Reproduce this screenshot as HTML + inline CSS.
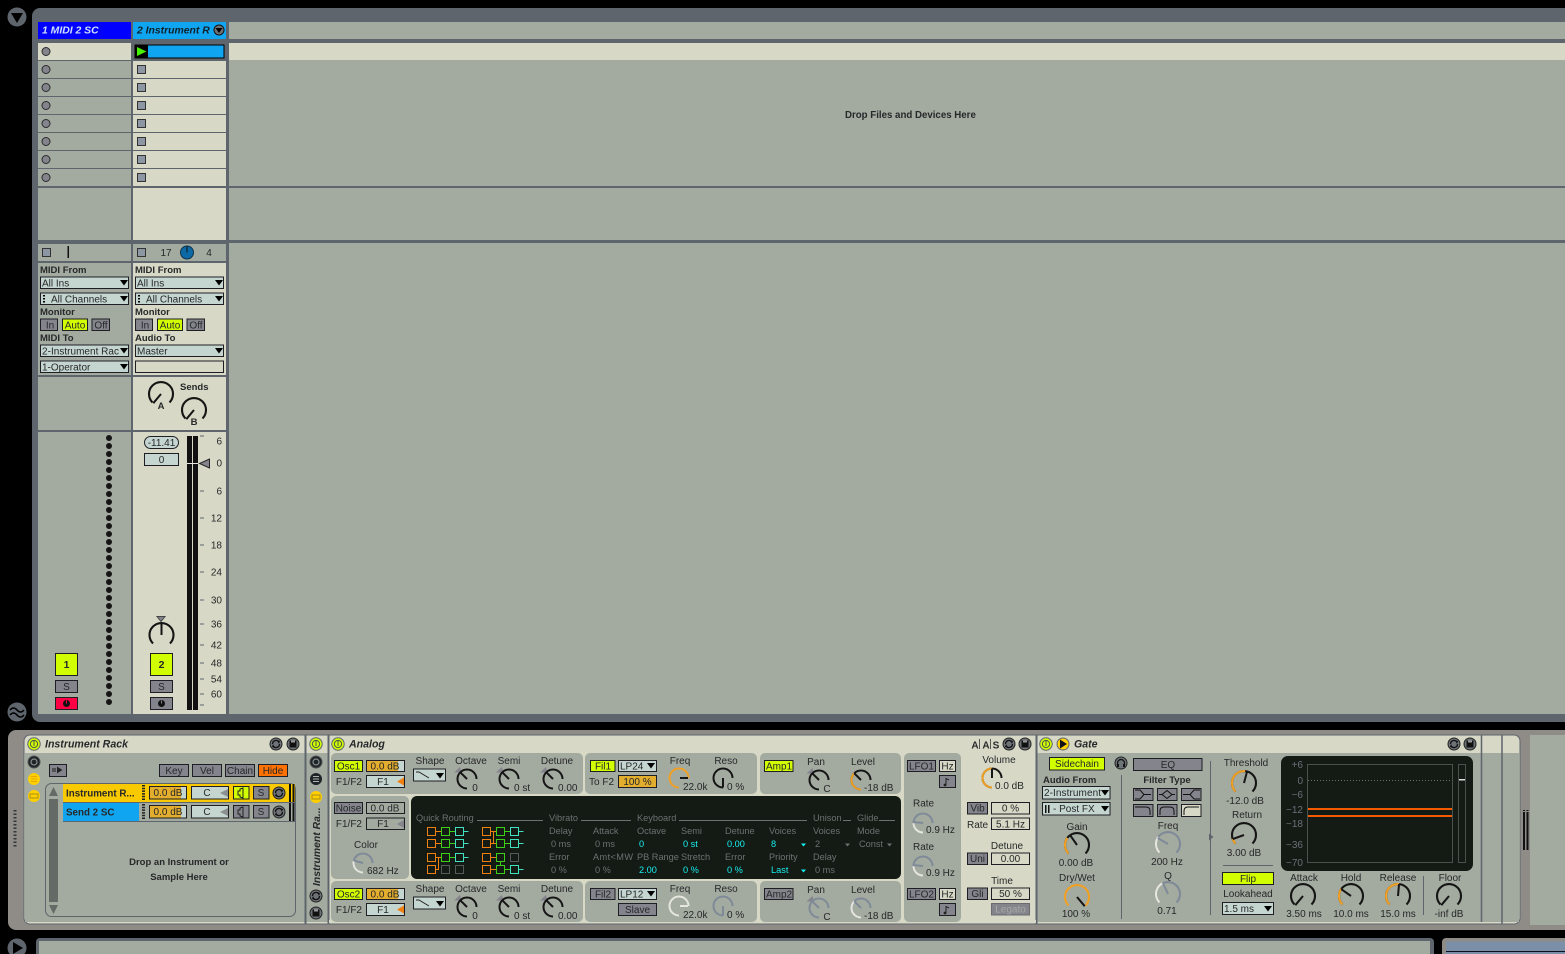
<!DOCTYPE html>
<html><head><meta charset="utf-8"><style>
html,body{margin:0;padding:0;background:#000;width:1565px;height:954px;overflow:hidden}
svg{display:block}
text{font-family:"Liberation Sans",sans-serif;font-size:10px;fill:#26282a}
.m{text-anchor:middle}.r{text-anchor:end}.B{font-weight:bold;font-size:9.5px}.I{font-style:italic;font-weight:bold}
.g{fill:#84848c;stroke:#1e1e24}.y{fill:#d2ff00;stroke:#1e1e24}.d{fill:#c5d5d0;stroke:#1e1e24}.e{fill:none;stroke:#1e1e24}.lt{fill:#d7d9c6;stroke:#1e1e24}
.o{fill:#e3ad2e}.lb{fill:#c5d5d0}
.a0{stroke:#151515}.aD{stroke:#7f8a98}.or{stroke:#f0a024}.wh{stroke:#e6e6e0}
.n{stroke:#151515;stroke-width:2;fill:none}.nD{stroke:#7f8a98;stroke-width:2;fill:none}
.dk{fill:#6c7272;font-size:9.2px}.cy{fill:#16f0f0;font-size:9.2px}
.pl{fill:#6a7078;font-size:10px}
.ro{fill:none;stroke:#f08010;stroke-width:1}.rg{fill:none;stroke:#3cd019;stroke-width:1}.rc{fill:none;stroke:#40e0c0;stroke-width:1}.rx{fill:none;stroke:#555a5a;stroke-width:1}
</style></head><body>
<svg xmlns="http://www.w3.org/2000/svg" width="1565" height="954" viewBox="0 0 1565 954">
<defs>
<path id="K" d="M-8.5,8.5A12,12 0 1 1 8.5,8.5" pathLength="100" fill="none" stroke-width="2.1"/>
<path id="S" d="M0,9.5A9.5,9.5 0 1 1 9.5,0" pathLength="100" fill="none" stroke-width="2"/>
<g id="PW"><circle r="6.2" fill="#d2ff00" stroke="#5f656d"/><circle r="3.6" fill="none" stroke="#4a5050"/><path d="M0-3V2" stroke="#4a5050"/></g>
<g id="HS"><circle r="6" fill="#6e7378" stroke="#222"/><path d="M-3.5,0A3.5,3.5 0 0 1 2.5,-2.5M3.5,0A3.5,3.5 0 0 1 -2.5,2.5" fill="none" stroke="#111" stroke-width="1.3"/><path d="M1-4l3 1-1 3zM-1 4l-3-1 1-3z" fill="#111"/></g>
<g id="SV"><circle r="6" fill="#6e7378" stroke="#222"/><path d="M-3.5-3.5h7v7h-7z" fill="#111"/><path d="M-2-3.5h4v2h-4z" fill="#999"/></g>
<path id="TG" d="M0,0h7.5l-1.5,-5.5z" fill="#84848c"/>
</defs>
<rect width="1565" height="954" fill="#000"/>

<!-- top left icons -->
<circle cx="17" cy="17" r="9.5" fill="#5f656d"/><path d="M11,13h12l-6,10z" fill="#000"/>
<circle cx="17" cy="712" r="9.5" fill="#5f656d"/><path d="M10,710q3.5-4 7 0t7 0M10,715q3.5-4 7 0t7 0" fill="none" stroke="#000" stroke-width="1.6"/>

<!-- session frame -->
<path d="M1565,8H40a8,8 0 0 0-8,8V714a8,8 0 0 0 8,8H1565z" fill="#5f656d"/>
<rect x="38" y="22" width="93" height="17" fill="#0000ff"/>
<rect x="133" y="22" width="93" height="17" fill="#10a5f0"/>
<rect x="229" y="22" width="1336" height="17" fill="#a3aa9f"/>
<text x="42" y="33.5" class="I" style="font-size:10.4px;fill:#cfe0ff">1 MIDI 2 SC</text>
<text x="137" y="33.5" class="I" style="font-size:10.4px;fill:#10202a">2 Instrument R</text>
<circle cx="219" cy="30" r="5" fill="#6e7378" stroke="#111"/><path d="M215.5,28h7l-3.5,5z" fill="#000"/>

<!-- clips -->
<rect x="38" y="43" width="93" height="17" fill="#d7d9c6"/>
<rect x="229" y="43" width="1336" height="17" fill="#d7d9c6"/>
<rect x="135" y="45" width="89" height="13" fill="#10a5f0" stroke="#000" stroke-width="1"/>
<rect x="135" y="45" width="13" height="13" fill="#000"/>
<path d="M137,47l9.5,4.5-9.5,4.5z" fill="#44f000"/>
<g fill="#a3aa9f">
<rect x="38" y="61" width="93" height="17"/><rect x="38" y="79" width="93" height="17"/><rect x="38" y="97" width="93" height="17"/><rect x="38" y="115" width="93" height="17"/><rect x="38" y="133" width="93" height="17"/><rect x="38" y="151" width="93" height="17"/><rect x="38" y="169" width="93" height="17"/>
<rect x="229" y="60" width="1336" height="126"/>
<rect x="38" y="188" width="93" height="52"/><rect x="229" y="188" width="1336" height="52"/>
</g>
<g fill="#d7d9c6">
<rect x="133" y="61" width="93" height="17"/><rect x="133" y="79" width="93" height="17"/><rect x="133" y="97" width="93" height="17"/><rect x="133" y="115" width="93" height="17"/><rect x="133" y="133" width="93" height="17"/><rect x="133" y="151" width="93" height="17"/><rect x="133" y="169" width="93" height="17"/>
<rect x="133" y="188" width="93" height="52"/>
</g>
<g fill="#84848c" stroke="#2a2a2e">
<circle cx="46" cy="51.5" r="4"/><circle cx="46" cy="69.5" r="4"/><circle cx="46" cy="87.5" r="4"/><circle cx="46" cy="105.5" r="4"/><circle cx="46" cy="123.5" r="4"/><circle cx="46" cy="141.5" r="4"/><circle cx="46" cy="159.5" r="4"/><circle cx="46" cy="177.5" r="4"/>
</g>
<g fill="#8d97a4" stroke="#333">
<rect x="137.5" y="65.5" width="8" height="8"/><rect x="137.5" y="83.5" width="8" height="8"/><rect x="137.5" y="101.5" width="8" height="8"/><rect x="137.5" y="119.5" width="8" height="8"/><rect x="137.5" y="137.5" width="8" height="8"/><rect x="137.5" y="155.5" width="8" height="8"/><rect x="137.5" y="173.5" width="8" height="8"/>
</g>
<text x="845" y="118" class="B" style="font-size:9.7px">Drop Files and Devices Here</text>

<!-- mixer -->
<rect x="38" y="244" width="93" height="17" fill="#a3aa9f"/><rect x="133" y="244" width="93" height="17" fill="#a3aa9f"/>
<rect x="229" y="243" width="1336" height="471" fill="#a3aa9f"/>
<rect x="42.5" y="248.5" width="8" height="8" fill="#8d97a4" stroke="#333"/><rect x="67.5" y="246" width="1.5" height="12" fill="#111"/>
<rect x="137.5" y="248.5" width="8" height="8" fill="#8d97a4" stroke="#333"/>
<text x="166" y="256" class="m">17</text><circle cx="187" cy="252.5" r="6.5" fill="#0b6aa6" stroke="#12324a"/><path d="M187,252.5v-6" stroke="#111"/><text x="209" y="256" class="m">4</text>

<rect x="38" y="263" width="93" height="112" fill="#a3aa9f"/><rect x="133" y="263" width="93" height="112" fill="#d7d9c6"/>
<rect x="38" y="377" width="93" height="53" fill="#a3aa9f"/><rect x="133" y="377" width="93" height="53" fill="#d7d9c6"/>
<rect x="38" y="432" width="93" height="282" fill="#a3aa9f"/><rect x="133" y="432" width="93" height="282" fill="#d7d9c6"/>

<!-- io col1 -->
<text x="40" y="273" class="B">MIDI From</text>
<rect x="40.5" y="277" width="88" height="11.5" class="d"/><text x="42" y="286.5">All Ins</text><path d="M120,280h8l-4,5.5z" fill="#000"/>
<rect x="40.5" y="293" width="88" height="11.5" class="d"/><path d="M44,295v1.5M44,298v1.5M44,301v1.5" stroke="#000" stroke-width="2"/><text x="51" y="302.5">All Channels</text><path d="M120,296h8l-4,5.5z" fill="#000"/>
<text x="40" y="315" class="B">Monitor</text>
<rect x="40.5" y="319" width="17" height="11.5" class="g"/><text x="50" y="328.5" class="m">In</text>
<rect x="62.5" y="319" width="25" height="11.5" class="y"/><text x="75" y="328.5" class="m">Auto</text>
<rect x="92" y="319" width="17.5" height="11.5" class="g"/><text x="101" y="328.5" class="m">Off</text>
<text x="40" y="341" class="B">MIDI To</text>
<rect x="40.5" y="345" width="88" height="11.5" class="d"/><text x="42" y="354.5" textLength="77">2-Instrument Rac</text><path d="M120,348h8l-4,5.5z" fill="#000"/>
<rect x="40.5" y="361" width="88" height="11.5" class="d"/><text x="42" y="370.5">1-Operator</text><path d="M120,364h8l-4,5.5z" fill="#000"/>
<!-- io col2 -->
<text x="135" y="273" class="B">MIDI From</text>
<rect x="135.5" y="277" width="88" height="11.5" class="d"/><text x="137" y="286.5">All Ins</text><path d="M215,280h8l-4,5.5z" fill="#000"/>
<rect x="135.5" y="293" width="88" height="11.5" class="d"/><path d="M139,295v1.5M139,298v1.5M139,301v1.5" stroke="#000" stroke-width="2"/><text x="146" y="302.5">All Channels</text><path d="M215,296h8l-4,5.5z" fill="#000"/>
<text x="135" y="315" class="B">Monitor</text>
<rect x="135.5" y="319" width="17" height="11.5" class="g"/><text x="145" y="328.5" class="m">In</text>
<rect x="157.5" y="319" width="25" height="11.5" class="y"/><text x="170" y="328.5" class="m">Auto</text>
<rect x="187" y="319" width="17.5" height="11.5" class="g"/><text x="196" y="328.5" class="m">Off</text>
<text x="135" y="341" class="B">Audio To</text>
<rect x="135.5" y="345" width="88" height="11.5" class="d"/><text x="137" y="354.5">Master</text><path d="M215,348h8l-4,5.5z" fill="#000"/>
<rect x="135.5" y="361" width="88" height="11.5" class="e"/>
<!-- sends -->
<text x="180" y="390" class="B">Sends</text>
<g transform="translate(161,394)"><use href="#K" class="a0"/><path class="n" transform="rotate(-140)" d="M0,0V-12"/></g><text x="161" y="409" class="B m">A</text>
<g transform="translate(194,410)"><use href="#K" class="a0"/><path class="n" transform="rotate(-140)" d="M0,0V-12"/></g><text x="194" y="425" class="B m">B</text>

<!-- fader col1 -->
<path d="M109,438V703" stroke="#151515" stroke-width="6" stroke-linecap="round" stroke-dasharray="0 8" fill="none"/>
<rect x="55.5" y="653.5" width="22" height="22" class="y"/><text x="66.5" y="668" class="B m" style="font-size:10.5px">1</text>
<rect x="55.5" y="680.5" width="22" height="12" class="g"/><text x="66.5" y="690" class="m">S</text>
<rect x="55.5" y="697.5" width="22" height="12" fill="#ff0045" stroke="#1e1e24"/><circle cx="66.5" cy="703.5" r="3.5" fill="#111"/><path d="M66.5,703.5V700.5" stroke="#ff0045"/>
<!-- fader col2 -->
<rect x="144.5" y="436.5" width="34" height="12" rx="6" class="d"/><text x="161.5" y="446" class="m">-11.41</text>
<rect x="144.5" y="453.5" width="34" height="12" class="d"/><text x="161.5" y="463" class="m">0</text>
<rect x="187" y="436" width="5" height="274" fill="#111"/><rect x="193" y="436" width="5" height="274" fill="#111"/>
<rect x="187" y="463" width="11" height="1" fill="#e8e8e0"/>
<path d="M209.5,459v9l-10-4.5z" fill="#84848c" stroke="#222"/>
<path d="M200,436h4M200,491h4M200,518h4M200,545h4M200,572h4M200,600h4M200,624h4M200,645h4M200,663h4M200,679h4M200,694h4M200,705h4" stroke="#5f656d"/>
<g>
<text x="222" y="444.5" class="r">6</text><text x="222" y="466.5" class="r">0</text><text x="222" y="494.5" class="r">6</text><text x="222" y="521.5" class="r">12</text><text x="222" y="548.5" class="r">18</text><text x="222" y="575.5" class="r">24</text><text x="222" y="603.5" class="r">30</text><text x="222" y="627.5" class="r">36</text><text x="222" y="648.5" class="r">42</text><text x="222" y="666.5" class="r">48</text><text x="222" y="682.5" class="r">54</text><text x="222" y="697.5" class="r">60</text>
</g>
<path d="M157,616.5h8l-4,5z" fill="#84848c" stroke="#444"/>
<g transform="translate(161.5,635)"><use href="#K" class="a0"/><path class="n" d="M0,0V-12"/></g>
<rect x="150.5" y="653.5" width="22" height="22" class="y"/><text x="161.5" y="668" class="B m" style="font-size:10.5px">2</text>
<rect x="150.5" y="680.5" width="22" height="12" class="g"/><text x="161.5" y="690" class="m">S</text>
<rect x="150.5" y="697.5" width="22" height="12" class="g"/><circle cx="161.5" cy="703.5" r="3.5" fill="#111"/><path d="M161.5,703.5V700.5" stroke="#84848c"/>

<!-- device panel -->
<path d="M1565,730H16a8,8 0 0 0-8,8V922a8,8 0 0 0 8,8H1565z" fill="#8f8c87"/>
<path d="M15,810V848" stroke="#33363a" stroke-width="3" stroke-dasharray="1.5 2" fill="none"/>
<rect x="1530" y="735" width="35" height="190" fill="#a3aa9f"/>
<rect x="1523" y="812" width="2" height="38" fill="#111"/><rect x="1526.5" y="812" width="2" height="38" fill="#111"/><path d="M1523,810.5h2M1526.5,810.5h2" stroke="#111"/>
<rect x="24" y="735" width="1496" height="189" rx="6" fill="#d7d9c6" stroke="#5f656d"/>
<rect x="25" y="753" width="280" height="169" fill="#a3aa9f"/>
<rect x="306" y="753" width="22" height="169" fill="#a3aa9f"/>
<rect x="1037" y="753" width="482" height="169" fill="#a3aa9f"/>
<path d="M305.5,735V924" stroke="#5f656d" stroke-width="2"/><path d="M328.5,735V924" stroke="#5f656d" stroke-width="2"/><path d="M1036.5,735V924" stroke="#5f656d" stroke-width="2"/><path d="M1481.5,735V922" stroke="#5f656d" stroke-width="1.5"/><path d="M1502,735V924" stroke="#5f656d" stroke-width="1.5"/>
<rect x="329" y="920" width="707" height="3" fill="#d7d9c6"/>

<!-- instrument rack -->
<use href="#PW" x="34" y="744"/>
<text x="45" y="747.5" class="I" style="font-size:10.6px">Instrument Rack</text>
<use href="#HS" x="276" y="744"/><use href="#SV" x="293" y="744"/>
<circle cx="34" cy="762" r="6" fill="#1e2428" stroke="#555"/><circle cx="34" cy="762" r="3" fill="none" stroke="#8a9090" stroke-width="1.2"/>
<circle cx="34" cy="779" r="6" fill="#ffcf00"/><path d="M31,776.5h6M31,779h6M31,781.5h6" stroke="#e8a800"/>
<circle cx="34" cy="796" r="6" fill="#ffcf00"/><rect x="30" y="794" width="8" height="4" fill="#ffcf00" stroke="#a89018"/>
<rect x="49.5" y="764.5" width="17" height="12" class="g"/><path d="M53,768v4M55,768v4M57.5,767.5l4,2.5-4,2.5z" stroke="#222" fill="#222"/>
<rect x="159.5" y="764.5" width="29" height="12" class="g"/><text x="174" y="774" class="m">Key</text>
<rect x="192.5" y="764.5" width="29" height="12" class="g"/><text x="207" y="774" class="m">Vel</text>
<rect x="225.5" y="764.5" width="29" height="12" class="g"/><text x="240" y="774" class="m">Chain</text>
<rect x="258.5" y="764.5" width="29" height="12" fill="#ff7100" stroke="#1e1e24"/><text x="273" y="774" class="m">Hide</text>
<rect x="45.5" y="783.5" width="250" height="133" rx="6" fill="#a3aa9f" stroke="#5f656d"/>
<rect x="49" y="799" width="9" height="103" fill="#646a66"/><path d="M49,796l4.5-9 4.5,9zM49,905l4.5,9 4.5-9z" fill="#646a66"/>
<rect x="63" y="784" width="232" height="18" fill="#f9ca00"/>
<rect x="63" y="803" width="76" height="18" fill="#10a5f0"/>
<path d="M63,802.5H295M63,821.5H295" stroke="#5f656d"/>
<text x="66" y="796.5" class="B" style="font-size:9.8px">Instrument R...</text><text x="66" y="815.5" class="B" style="font-size:9.8px">Send 2 SC</text>
<path d="M143.5,785V801M143.5,804V820" stroke="#222" stroke-width="3" stroke-dasharray="1.5 1.2" fill="none"/>
<!-- chain row 1 -->
<rect x="149.5" y="786.5" width="37" height="12.5" class="lb"/><rect x="150" y="787" width="31" height="12" class="o"/><rect x="149.5" y="786.5" width="37" height="12.5" class="e"/><text x="168" y="796" class="m">0.0 dB</text>
<rect x="191.5" y="786.5" width="37" height="12.5" class="d"/><text x="207" y="796" class="m">C</text><path d="M228,789v8l-8-4z" fill="#8a9090"/>
<rect x="233.5" y="786.5" width="15.5" height="12.5" class="y"/><path d="M238,791h2v-2l3-1v10l-3-1v-2h-2z" fill="none" stroke="#222"/>
<rect x="253.5" y="786.5" width="15.5" height="12.5" class="g"/><text x="261" y="796" class="m">S</text>
<use href="#HS" x="279" y="793"/><rect x="289" y="784" width="2" height="18" fill="#111"/><rect x="292.5" y="784" width="2" height="18" fill="#111"/>
<!-- chain row 2 -->
<rect x="149.5" y="805.5" width="37" height="12.5" class="lb"/><rect x="150" y="806" width="31" height="12" class="o"/><rect x="149.5" y="805.5" width="37" height="12.5" class="e"/><text x="168" y="815" class="m">0.0 dB</text>
<rect x="191.5" y="805.5" width="37" height="12.5" class="d"/><text x="207" y="815" class="m">C</text><path d="M228,808v8l-8-4z" fill="#8a9090"/>
<rect x="233.5" y="805.5" width="15.5" height="12.5" class="g"/><path d="M238,810h2v-2l3-1v10l-3-1v-2h-2z" fill="none" stroke="#222"/>
<rect x="253.5" y="805.5" width="15.5" height="12.5" class="g"/><text x="261" y="815" class="m">S</text>
<use href="#HS" x="279" y="812"/><rect x="289" y="803" width="2" height="18" fill="#111"/><rect x="292.5" y="803" width="2" height="18" fill="#111"/>
<text x="179" y="865" class="B m">Drop an Instrument or</text><text x="179" y="880" class="B m">Sample Here</text>

<!-- rack strip -->
<use href="#PW" x="316" y="744"/>
<circle cx="316" cy="762" r="6" fill="#1e2428" stroke="#555"/><circle cx="316" cy="762" r="3" fill="none" stroke="#8a9090" stroke-width="1.2"/>
<circle cx="316" cy="779" r="6" fill="#1e2428"/><path d="M313,776.5h6M313,779h6M313,781.5h6" stroke="#b0b4b0"/>
<circle cx="316" cy="797" r="6" fill="#ffcf00"/><rect x="312" y="795" width="8" height="4" fill="#ffcf00" stroke="#a89018"/>
<text transform="translate(320,886) rotate(-90)" class="I" style="font-size:10.4px">Instrument Ra...</text>
<use href="#HS" x="316" y="896"/><use href="#SV" x="316" y="913"/>

<!-- analog -->
<use href="#PW" x="338" y="744"/>
<text x="349" y="747.5" class="I" style="font-size:10.6px">Analog</text>
<g fill="#a3aa9f">
<rect x="331" y="753" width="252" height="41" rx="5"/><rect x="585" y="753" width="172" height="41" rx="5"/><rect x="760" y="753" width="141" height="41" rx="5"/>
<rect x="331" y="796" width="78" height="83" rx="5"/>
<rect x="331" y="881" width="252" height="41" rx="5"/><rect x="585" y="881" width="172" height="41" rx="5"/><rect x="760" y="881" width="141" height="41" rx="5"/>
<rect x="904" y="753" width="57" height="169" rx="5"/>
</g>
<rect x="411" y="796" width="490" height="83" rx="6" fill="#141a14"/>

<!-- osc1 -->
<rect x="334.5" y="760.5" width="28" height="11" class="y"/><text x="348.5" y="769.5" class="m">Osc1</text>
<rect x="366.5" y="760.5" width="38" height="11" class="lb"/><rect x="367" y="761" width="31" height="10" class="o"/><rect x="366.5" y="760.5" width="38" height="11" class="e"/><text x="385" y="769.5" class="m">0.0 dB</text>
<text x="362" y="785" class="r">F1/F2</text>
<rect x="366.5" y="775.5" width="38" height="12" class="d"/><text x="383" y="785" class="m">F1</text><path d="M404,777.5v8l-7-4z" fill="#f08010"/>
<text x="430" y="764" class="m">Shape</text>
<rect x="413.5" y="769" width="32" height="12" class="d"/><path d="M416,772h3l10,6" fill="none" stroke="#222"/><path d="M436,773h8l-4,5.5z" fill="#000"/>
<text x="471" y="764" class="m">Octave</text><text x="509" y="764" class="m">Semi</text><text x="557" y="764" class="m">Detune</text>
<use href="#TG" x="454" y="772.5"/><g transform="translate(467,779)"><use href="#S" class="a0"/><path class="n" transform="rotate(-45)" d="M0,0V-9.5"/></g><text x="475" y="791" class="m">0</text>
<use href="#TG" x="496" y="772.5"/><g transform="translate(509,779)"><use href="#S" class="a0"/><path class="n" transform="rotate(-45)" d="M0,0V-9.5"/></g><text x="514" y="791">0 st</text>
<use href="#TG" x="540" y="772.5"/><g transform="translate(553,779)"><use href="#S" class="a0"/><path class="n" transform="rotate(-45)" d="M0,0V-9.5"/></g><text x="558" y="791">0.00</text>
<!-- noise -->
<rect x="334.5" y="802.5" width="28" height="11" class="g"/><text x="348.5" y="811.5" class="m">Noise</text>
<rect x="366.5" y="802.5" width="38" height="11" class="e"/><text x="385" y="811.5" class="m">0.0 dB</text>
<text x="362" y="827" class="r">F1/F2</text>
<rect x="366.5" y="818" width="38" height="11.5" class="e"/><text x="383" y="827" class="m">F1</text><path d="M404,820v8l-7-4z" fill="#84848c"/>
<text x="366" y="848" class="m">Color</text>
<g transform="translate(363,863)"><use href="#S" class="aD"/><use href="#S" class="wh" stroke-dasharray="38 100"/><path class="nD" transform="rotate(-75)" d="M0,0V-9.5"/></g>
<text x="367" y="874">682 Hz</text>
<!-- osc2 -->
<rect x="334.5" y="888.5" width="28" height="11" class="y"/><text x="348.5" y="897.5" class="m">Osc2</text>
<rect x="366.5" y="888.5" width="38" height="11" class="lb"/><rect x="367" y="889" width="31" height="10" class="o"/><rect x="366.5" y="888.5" width="38" height="11" class="e"/><text x="385" y="897.5" class="m">0.0 dB</text>
<text x="362" y="913" class="r">F1/F2</text>
<rect x="366.5" y="903.5" width="38" height="12" class="d"/><text x="383" y="913" class="m">F1</text><path d="M404,905.5v8l-7-4z" fill="#f08010"/>
<text x="430" y="892" class="m">Shape</text>
<rect x="413.5" y="897" width="32" height="12" class="d"/><path d="M416,900h3l10,6" fill="none" stroke="#222"/><path d="M436,901h8l-4,5.5z" fill="#000"/>
<text x="471" y="892" class="m">Octave</text><text x="509" y="892" class="m">Semi</text><text x="557" y="892" class="m">Detune</text>
<use href="#TG" x="454" y="900.5"/><g transform="translate(467,907)"><use href="#S" class="a0"/><path class="n" transform="rotate(-45)" d="M0,0V-9.5"/></g><text x="475" y="919" class="m">0</text>
<use href="#TG" x="496" y="900.5"/><g transform="translate(509,907)"><use href="#S" class="a0"/><path class="n" transform="rotate(-45)" d="M0,0V-9.5"/></g><text x="514" y="919">0 st</text>
<use href="#TG" x="540" y="900.5"/><g transform="translate(553,907)"><use href="#S" class="a0"/><path class="n" transform="rotate(-45)" d="M0,0V-9.5"/></g><text x="558" y="919">0.00</text>

<!-- fil1 -->
<rect x="590.5" y="760.5" width="24.5" height="11" class="y"/><text x="603" y="769.5" class="m">Fil1</text>
<rect x="618.5" y="760.5" width="38" height="11" class="d"/><text x="620" y="769.5">LP24</text><path d="M647,763h8l-4,5.5z" fill="#000"/>
<text x="589" y="785">To F2</text>
<rect x="618.5" y="775.5" width="38" height="12" fill="#e3ad2e" stroke="#1e1e24"/><text x="637.5" y="785" class="m">100 %</text>
<text x="680" y="764" class="m">Freq</text><text x="726" y="764" class="m">Reso</text>
<g transform="translate(679,778)"><use href="#S" class="or"/><path class="n" transform="rotate(90)" d="M0,-1V-9"/></g><text x="683" y="790">22.0k</text>
<g transform="translate(723,778)"><use href="#S" class="a0"/><path class="n" transform="rotate(180)" d="M0,0V-9.5"/></g><text x="727" y="790">0 %</text>
<!-- fil2 -->
<rect x="590.5" y="888.5" width="24.5" height="11" class="g"/><text x="603" y="897.5" class="m">Fil2</text>
<rect x="618.5" y="888.5" width="38" height="11" class="d"/><text x="620" y="897.5">LP12</text><path d="M647,891h8l-4,5.5z" fill="#000"/>
<rect x="618.5" y="903.5" width="38" height="12" class="g"/><text x="637.5" y="913" class="m">Slave</text>
<text x="680" y="892" class="m">Freq</text><text x="726" y="892" class="m">Reso</text>
<g transform="translate(679,906)"><use href="#S" class="wh"/><path class="nD" style="stroke:#e6e6e0" transform="rotate(90)" d="M0,-1V-9"/></g><text x="683" y="918">22.0k</text>
<g transform="translate(723,906)"><use href="#S" class="aD"/><path class="nD" transform="rotate(180)" d="M0,0V-9.5"/></g><text x="727" y="918">0 %</text>
<!-- amp -->
<rect x="764.5" y="760.5" width="28.5" height="11" class="y"/><text x="779" y="769.5" class="m">Amp1</text>
<text x="816" y="765" class="m">Pan</text><text x="863" y="765" class="m">Level</text>
<use href="#TG" x="806.5" y="773.5"/><g transform="translate(819,780)"><use href="#S" class="a0"/><path class="n" transform="rotate(-45)" d="M0,0V-9.5"/></g><text x="827" y="792" class="m">C</text>
<g transform="translate(861,780)"><use href="#S" class="a0"/><use href="#S" class="or" stroke-dasharray="50 100"/><path class="n" transform="rotate(-45)" d="M0,0V-9.5"/></g><text x="864" y="791">-18 dB</text>
<rect x="764.5" y="888.5" width="28.5" height="11" class="g"/><text x="779" y="897.5" class="m">Amp2</text>
<text x="816" y="893" class="m">Pan</text><text x="863" y="893" class="m">Level</text>
<use href="#TG" x="806.5" y="901.5"/><g transform="translate(819,908)"><use href="#S" class="aD"/><path class="nD" transform="rotate(-45)" d="M0,0V-9.5"/></g><text x="827" y="920" class="m">C</text>
<g transform="translate(861,908)"><use href="#S" class="aD"/><use href="#S" class="wh" stroke-dasharray="50 100"/><path class="nD" transform="rotate(-45)" d="M0,0V-9.5"/></g><text x="864" y="919">-18 dB</text>

<!-- dark panel -->
<g>
<text x="416" y="821" class="dk">Quick Routing</text><text x="549" y="821" class="dk">Vibrato</text><text x="637" y="821" class="dk">Keyboard</text><text x="813" y="821" class="dk">Unison</text><text x="857" y="821" class="dk">Glide</text>
<path d="M477,820.5h66M581,820.5h50M679,820.5h128M843,820.5h8M879,820.5h16" stroke="#6c7272"/>
<text x="549" y="834" class="dk">Delay</text><text x="551" y="847" class="dk">0 ms</text><text x="549" y="860" class="dk">Error</text><text x="551" y="873" class="dk">0 %</text>
<text x="593" y="834" class="dk">Attack</text><text x="595" y="847" class="dk">0 ms</text><text x="593" y="860" class="dk" textLength="40">Amt&lt;MW</text><text x="595" y="873" class="dk">0 %</text>
<text x="637" y="834" class="dk">Octave</text><text x="639" y="847" class="cy">0</text><text x="637" y="860" class="dk">PB Range</text><text x="639" y="873" class="cy">2.00</text>
<text x="681" y="834" class="dk">Semi</text><text x="683" y="847" class="cy">0 st</text><text x="681" y="860" class="dk">Stretch</text><text x="683" y="873" class="cy">0 %</text>
<text x="725" y="834" class="dk">Detune</text><text x="727" y="847" class="cy">0.00</text><text x="725" y="860" class="dk">Error</text><text x="727" y="873" class="cy">0 %</text>
<text x="769" y="834" class="dk">Voices</text><text x="771" y="847" class="cy">8</text><text x="769" y="860" class="dk">Priority</text><text x="771" y="873" class="cy">Last</text>
<text x="813" y="834" class="dk">Voices</text><text x="815" y="847" class="dk">2</text><text x="813" y="860" class="dk">Delay</text><text x="815" y="873" class="dk">0 ms</text>
<text x="857" y="834" class="dk">Mode</text><text x="859" y="847" class="dk">Const</text>
<path d="M801,843.5h5l-2.5,3zM801,869.5h5l-2.5,3z" fill="#16f0f0"/>
<path d="M845,843.5h5l-2.5,3zM887,843.5h5l-2.5,3z" fill="#6c7272"/>
</g>
<!-- routing -->
<g class="ro"><rect x="427.5" y="827.5" width="8" height="8"/><rect x="427.5" y="839.5" width="8" height="8"/><rect x="427.5" y="853.5" width="8" height="8"/><rect x="427.5" y="865.5" width="8" height="8"/><rect x="482.5" y="827.5" width="8" height="8"/><rect x="482.5" y="839.5" width="8" height="8"/><rect x="482.5" y="853.5" width="8" height="8"/><rect x="482.5" y="865.5" width="8" height="8"/><path d="M435.5,831.5h6M435.5,843.5h6M435.5,857.5h6M435.5,869.5h3v-12M490.5,831.5h6M490.5,843.5h6M493.5,831.5v12M490.5,857.5h6M490.5,869.5h6"/></g>
<g class="rg"><rect x="441.5" y="827.5" width="8" height="8"/><rect x="441.5" y="839.5" width="8" height="8"/><rect x="441.5" y="853.5" width="8" height="8"/><rect x="496.5" y="827.5" width="8" height="8"/><rect x="496.5" y="839.5" width="8" height="8"/><rect x="496.5" y="853.5" width="8" height="8"/><rect x="496.5" y="865.5" width="8" height="8"/><path d="M449.5,831.5h6M449.5,843.5h6M449.5,857.5h6M504.5,831.5h6M504.5,843.5h6M504.5,869.5h6M500.5,861.5v4"/></g>
<g class="rc"><rect x="455.5" y="827.5" width="8" height="8"/><rect x="455.5" y="839.5" width="8" height="8"/><rect x="455.5" y="853.5" width="8" height="8"/><rect x="510.5" y="827.5" width="8" height="8"/><rect x="510.5" y="839.5" width="8" height="8"/><rect x="510.5" y="865.5" width="8" height="8"/><path d="M463.5,831.5h5M463.5,843.5h5M463.5,857.5h5M518.5,831.5h5M518.5,843.5h5M518.5,869.5h5"/></g>
<g class="rx"><rect x="441.5" y="865.5" width="8" height="8"/><rect x="455.5" y="865.5" width="8" height="8"/><rect x="510.5" y="853.5" width="8" height="8"/></g>

<!-- lfo -->
<rect x="907.5" y="760.5" width="28" height="11" class="g"/><text x="921.5" y="769.5" class="m">LFO1</text>
<rect x="939.5" y="760.5" width="16" height="11" class="lt"/><text x="947.5" y="769.5" class="m">Hz</text>
<rect x="939.5" y="775.5" width="16" height="12" class="g"/><path d="M946,785v-6.5l3,1.5" fill="none" stroke="#222"/><circle cx="945" cy="785" r="1.4" fill="#222"/>
<text x="913" y="806.5">Rate</text>
<g transform="translate(923,823)"><use href="#S" class="aD"/><use href="#S" class="wh" stroke-dasharray="33 100"/><path class="nD" transform="rotate(-85)" d="M0,0V-9.5"/></g><text x="926" y="833">0.9 Hz</text>
<text x="913" y="850">Rate</text>
<g transform="translate(923,866)"><use href="#S" class="aD"/><use href="#S" class="wh" stroke-dasharray="33 100"/><path class="nD" transform="rotate(-85)" d="M0,0V-9.5"/></g><text x="926" y="876">0.9 Hz</text>
<rect x="907.5" y="888.5" width="28" height="11" class="g"/><text x="921.5" y="897.5" class="m">LFO2</text>
<rect x="939.5" y="888.5" width="16" height="11" class="lt"/><text x="947.5" y="897.5" class="m">Hz</text>
<rect x="939.5" y="903.5" width="16" height="12" class="g"/><path d="M946,913v-6.5l3,1.5" fill="none" stroke="#222"/><circle cx="945" cy="913" r="1.4" fill="#222"/>

<!-- aas -->
<text x="975" y="748.5" class="B m" style="font-size:10px">A</text><path d="M979.5,739v10" stroke="#555"/><text x="986" y="748.5" class="B m" style="font-size:10px">A</text><path d="M990.5,739v10" stroke="#555"/><text x="996" y="748.5" class="B m" style="font-size:10px">S</text>
<use href="#HS" x="1009" y="744"/><use href="#SV" x="1025" y="744"/>
<text x="999" y="763" class="m">Volume</text>
<g transform="translate(992,778)"><use href="#S" class="a0"/><use href="#S" class="or" stroke-dasharray="67 100"/><path class="n" d="M0,0V-9.5"/></g><text x="995" y="789">0.0 dB</text>
<rect x="967.5" y="802.5" width="20" height="11.5" class="g"/><text x="977.5" y="811.5" class="m">Vib</text>
<rect x="991.5" y="802.5" width="38" height="11.5" class="e"/><text x="1010.5" y="811.5" class="m">0 %</text>
<text x="967" y="828">Rate</text><rect x="991.5" y="818" width="38" height="11.5" class="e"/><text x="1010.5" y="827.5" class="m">5.1 Hz</text>
<text x="1007" y="849" class="m">Detune</text>
<rect x="967.5" y="853" width="20" height="11.5" class="g"/><text x="977.5" y="862" class="m">Uni</text>
<rect x="991.5" y="853" width="38" height="11.5" class="e"/><text x="1010.5" y="862" class="m">0.00</text>
<text x="1002" y="884" class="m">Time</text>
<rect x="967.5" y="888" width="20" height="11.5" class="g"/><text x="977.5" y="897" class="m">Gli</text>
<rect x="991.5" y="888" width="38" height="11.5" class="e"/><text x="1010.5" y="897" class="m">50 %</text>
<rect x="991.5" y="903.5" width="38" height="11.5" fill="#84848c" stroke="#6a6a70"/><text x="1010.5" y="912.5" class="m" style="fill:#a8aaa4">Legato</text>

<!-- gate -->
<use href="#PW" x="1046" y="744"/>
<circle cx="1063" cy="744" r="6" fill="#ffcf00" stroke="#5f656d"/><path d="M1060,739.5l7,4.5-7,4.5z" fill="#111"/>
<text x="1074" y="747.5" class="I" style="font-size:10.6px">Gate</text>
<use href="#HS" x="1454" y="744"/><use href="#SV" x="1470" y="744"/>
<rect x="1049.5" y="757.5" width="55" height="12.5" class="y"/><text x="1077" y="767" class="m">Sidechain</text>
<circle cx="1121" cy="763" r="6" fill="#6e7378" stroke="#222"/><path d="M1117.5,765v-2a3.5,3.5 0 0 1 7,0v2" fill="none" stroke="#111" stroke-width="1.2"/><rect x="1117" y="764" width="2" height="3" fill="#111"/><rect x="1123" y="764" width="2" height="3" fill="#111"/>
<rect x="1133.5" y="758.5" width="68.5" height="12" class="g"/><text x="1168" y="768" class="m">EQ</text>
<path d="M1121.5,775V919M1210.5,761V915" stroke="#5f656d"/><path d="M1209,833.5l4.5,3.5-4.5,3.5z" fill="#5f656d"/>
<text x="1043" y="783" class="B">Audio From</text>
<rect x="1042.5" y="786.5" width="67.5" height="12.5" class="d"/><text x="1044" y="796" textLength="57">2-Instrument</text><path d="M1101,790h8l-4,5.5z" fill="#000"/>
<rect x="1042.5" y="802.5" width="67.5" height="12.5" class="d"/><path d="M1045,805h1.5v8h-1.5zM1048,805h1.5v8h-1.5z" fill="#111"/><text x="1053" y="812">- Post FX</text><path d="M1101,806h8l-4,5.5z" fill="#000"/>
<text x="1077" y="830" class="m">Gain</text>
<g transform="translate(1077,845)"><use href="#K" class="a0"/><use href="#K" class="or" stroke-dasharray="30 100"/><path class="n" transform="rotate(-35)" d="M0,0V-12"/></g>
<text x="1076" y="866" class="m">0.00 dB</text>
<text x="1077" y="881" class="m">Dry/Wet</text>
<g transform="translate(1077,897)"><use href="#K" class="or"/><path class="n" transform="rotate(140)" d="M0,0V-12"/></g>
<text x="1076" y="917" class="m">100 %</text>
<text x="1167" y="783" class="B m">Filter Type</text>
<rect x="1133.5" y="788.5" width="19.5" height="12" class="g"/><path d="M1135,790h5l4,4.5-4,4.5h-5M1144,794.5h7" fill="none" stroke="#111"/>
<rect x="1157.5" y="788.5" width="19.5" height="12" class="g"/><path d="M1159,794.5h3l5-4 5,4h3M1162,794.5l5,4 5-4" fill="none" stroke="#111"/>
<rect x="1181.5" y="788.5" width="19.5" height="12" class="g"/><path d="M1200,790h-6l-4,4.5 4,4.5h6M1190,794.5h-7" fill="none" stroke="#111"/>
<rect x="1133.5" y="804.5" width="19.5" height="12" class="g"/><path d="M1135,807h11q4,0 4,4v4" fill="none" stroke="#111"/>
<rect x="1157.5" y="804.5" width="19.5" height="12" class="g"/><path d="M1160,815v-4q0-4 4-4h6q4,0 4,4v4" fill="none" stroke="#111"/>
<rect x="1181.5" y="804.5" width="19.5" height="12" class="lt"/><path d="M1184,815v-4q0-4 4-4h11" fill="none" stroke="#111"/>
<text x="1168" y="829" class="m">Freq</text>
<g transform="translate(1168,844)"><use href="#K" class="aD"/><use href="#K" class="wh" stroke-dasharray="30 100"/><path class="nD" transform="rotate(-60)" d="M0,0V-12"/></g>
<text x="1167" y="865" class="m">200 Hz</text>
<text x="1168" y="879" class="m">Q</text>
<g transform="translate(1168,894)"><use href="#K" class="aD"/><use href="#K" class="wh" stroke-dasharray="40 100"/><path class="nD" transform="rotate(-25)" d="M0,0V-12"/></g>
<text x="1167" y="914" class="m">0.71</text>
<text x="1246" y="766" class="m">Threshold</text>
<g transform="translate(1244,783)"><use href="#K" class="a0"/><use href="#K" class="or" stroke-dasharray="52 100"/><path class="n" transform="rotate(15)" d="M0,0V-12"/></g>
<text x="1245" y="804" class="m">-12.0 dB</text>
<text x="1247" y="818" class="m">Return</text>
<g transform="translate(1244,835)"><use href="#K" class="a0"/><use href="#K" class="or" stroke-dasharray="10 100"/><path class="n" transform="rotate(-110)" d="M0,0V-12"/></g>
<text x="1244" y="856" class="m">3.00 dB</text>
<path d="M1223,865.5h50" stroke="#5f656d"/>
<rect x="1222.5" y="872.5" width="51" height="12" class="y"/><text x="1248" y="882" class="m">Flip</text>
<text x="1248" y="897" class="m">Lookahead</text>
<rect x="1222.5" y="902.5" width="51" height="12" class="d"/><text x="1224" y="912">1.5 ms</text><path d="M1264,906h8l-4,5.5z" fill="#000"/>
<rect x="1281" y="756" width="192" height="115" rx="7" fill="#141a14"/>
<rect x="1307.5" y="764.5" width="145" height="98" fill="none" stroke="#4c504c"/>
<path d="M1308,780.5h144" stroke="#6a706a" stroke-dasharray="1 2"/>
<rect x="1458.5" y="764.5" width="7" height="98" fill="none" stroke="#4c504c"/><rect x="1459" y="779" width="6" height="1.5" fill="#ddd"/>
<rect x="1308" y="808" width="144" height="2" fill="#f55a00"/><rect x="1308" y="815" width="144" height="2" fill="#f55a00"/>
<text x="1303" y="768" class="r pl">+6</text><text x="1303" y="784" class="r pl">0</text><text x="1303" y="798" class="r pl">−6</text><text x="1303" y="813" class="r pl">−12</text><text x="1303" y="827" class="r pl">−18</text><text x="1303" y="848" class="r pl">−36</text><text x="1303" y="866" class="r pl">−70</text>
<text x="1304" y="881" class="m">Attack</text><text x="1351" y="881" class="m">Hold</text><text x="1398" y="881" class="m">Release</text><text x="1450" y="881" class="m">Floor</text>
<path d="M1423.5,876V915" stroke="#5f656d"/>
<g transform="translate(1303,896)"><use href="#K" class="a0"/><path class="n" transform="rotate(-140)" d="M0,0V-12"/></g>
<g transform="translate(1351,896)"><use href="#K" class="a0"/><use href="#K" class="or" stroke-dasharray="30 100"/><path class="n" transform="rotate(-55)" d="M0,0V-12"/></g>
<g transform="translate(1398,896)"><use href="#K" class="a0"/><use href="#K" class="or" stroke-dasharray="52 100"/><path class="n" transform="rotate(5)" d="M0,0V-12"/></g>
<g transform="translate(1449,896)"><use href="#K" class="a0"/><path class="n" transform="rotate(-140)" d="M0,0V-12"/></g>
<text x="1304" y="917" class="m">3.50 ms</text><text x="1351" y="917" class="m">10.0 ms</text><text x="1398" y="917" class="m">15.0 ms</text><text x="1449" y="917" class="m">-inf dB</text>

<!-- bottom -->
<circle cx="17" cy="948" r="9.5" fill="#5f656d"/><path d="M13,942l10,6-10,6z" fill="#000"/>
<path d="M36,954V942a4,4 0 0 1 4-4H1430a4,4 0 0 1 4,4V954z" fill="#5f656d"/>
<rect x="39" y="941" width="1391" height="13" fill="#a3aa9f"/>
<path d="M1442,954V942a4,4 0 0 1 4-4H1565V954z" fill="#8f8c87"/>
<rect x="1446" y="941.5" width="119" height="12.5" fill="#7c8fa8"/><rect x="1446" y="951" width="119" height="1" fill="#0a1020"/>
</svg>
</body></html>
